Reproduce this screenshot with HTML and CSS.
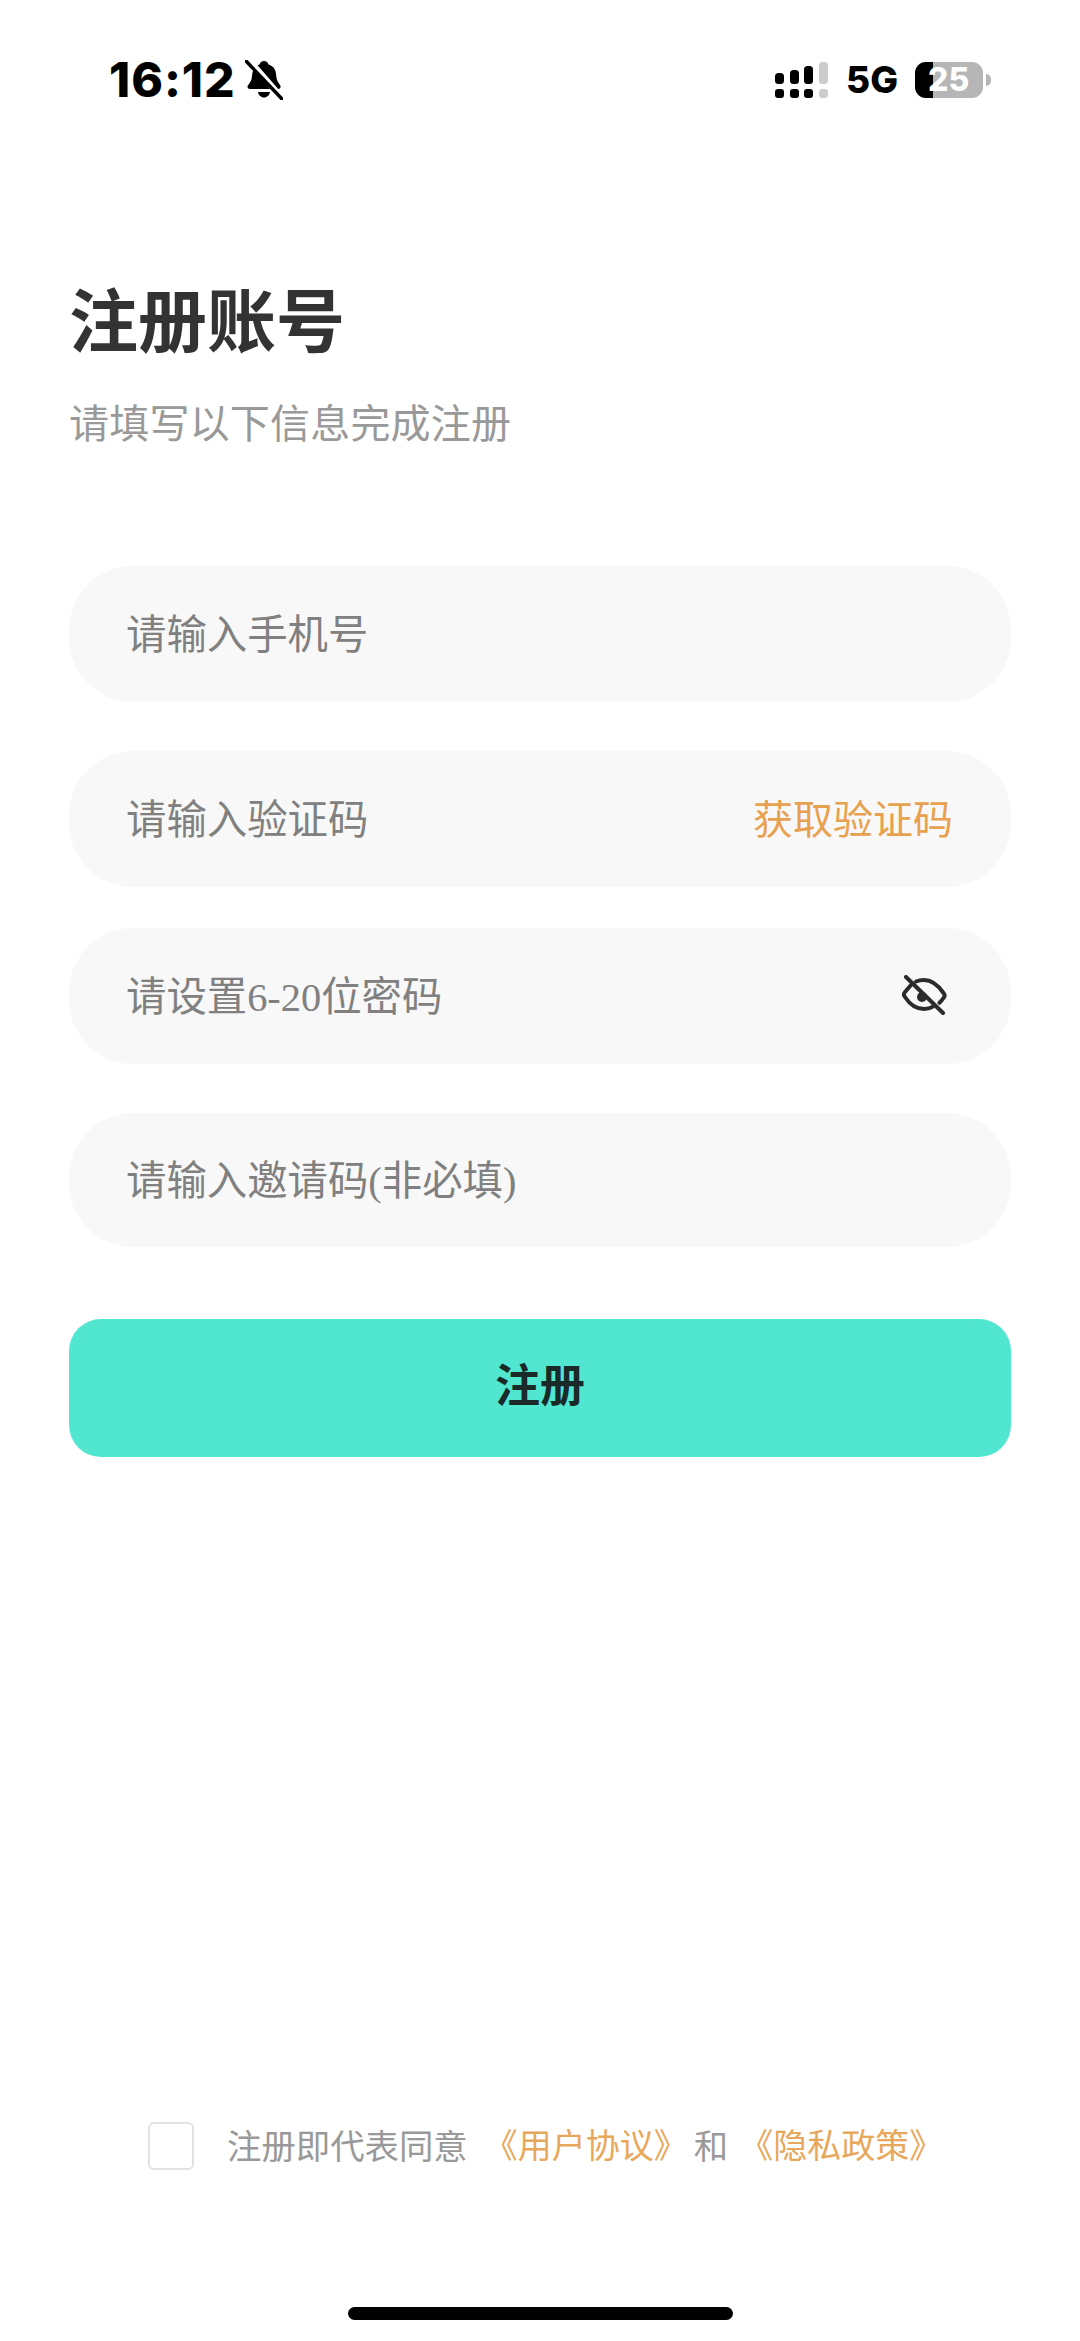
FILE: index.html
```html
<!DOCTYPE html>
<html lang="zh-CN">
<head>
    <meta charset="UTF-8">
    <meta name="viewport" content="width=device-width, initial-scale=1.0">
    <title>注册账号</title>
    <link rel="stylesheet" href="styles.css">
</head>
<body>
    <div class="page">
        <div class="status-bar">
            <div class="status-left">
                <span class="time">16:12</span>
                <svg class="bell" width="38" height="40" viewBox="0 0 38 40">
                    <path d="M19 1c2.500 0 4 1.600 4.500 3.600 5.500 1.500 7.500 6 7.800 11.400.2 4 1.700 6.500 3.700 9 1.200 1.600.6 4-1.800 4H5c-2.600 0-3.200-2.500-1.800-4 2.200-2.500 3.600-5 3.800-9 .3-5.400 2.400-9.900 7.500-11.400C15 2.600 16.500 1 19 1z"/>
                    <path d="M13 32h12c-.5 3.200-3 5.500-6 5.500s-5.500-2.300-6-5.500z"/>
                    <path class="bell-gap" d="M3 -1 37 38"/>
                    <path class="bell-slash" d="M1 1 37 39"/>
                </svg>
            </div>
            <div class="status-right">
                <svg class="signal" width="53" height="36" viewBox="0 0 53 36">
                    <rect x="0" y="11" width="9" height="11" rx="3.500"/>
                    <rect x="15" y="8" width="9" height="14" rx="3.500"/>
                    <rect x="29" y="4" width="9" height="18" rx="3.500"/>
                    <rect class="signal-off" x="44" y="0" width="9" height="22" rx="3.500"/>
                    <rect x="0" y="27" width="9" height="9" rx="3"/>
                    <rect x="15" y="27" width="9" height="9" rx="3"/>
                    <rect x="29" y="27" width="9" height="9" rx="3"/>
                    <rect class="signal-off" x="44" y="27" width="9" height="9" rx="3"/>
                </svg>
                <span class="network">5G</span>
                <div class="battery">
                    <div class="battery-body">
                        <div class="battery-level"></div>
                        <span class="battery-text">25</span>
                    </div>
                    <div class="battery-nub"></div>
                </div>
            </div>
        </div>

        <h1 class="title">注册账号</h1>
        <p class="subtitle">请填写以下信息完成注册</p>

        <div class="form">
            <div class="field">
                <span class="placeholder">请输入手机号</span>
            </div>
            <div class="field">
                <span class="placeholder">请输入验证码</span>
                <span class="get-code">获取验证码</span>
            </div>
            <div class="field field-close">
                <span class="placeholder">请设置6-20位密码</span>
                <svg class="eye" width="46" height="42" viewBox="0 0 46 42">
                    <path d="M10 10 4 17c-1.500 1.800-1.500 3.400 0 5 4.500 7 11 12 19 12 3.500 0 6.500-.8 9-2.400"/>
                    <path d="M15 6.500C17.500 5.500 20 5 23 5c7.500 0 14 5 19.500 13 1.500 1.800 1.500 3.400 0 5-1.200 1.800-2.500 3.400-4 4.800"/>
                    <circle class="eye-pupil" cx="21" cy="22" r="5"/>
                    <path d="M5 2 42 38"/>
                </svg>
            </div>
            <div class="field field-last">
                <span class="placeholder">请输入邀请码(非必填)</span>
            </div>
        </div>

        <button class="submit">注册</button>

        <div class="agree">
            <span class="checkbox"></span>
            <span class="agree-text">注册即代表同意</span>
            <span class="link">《用户协议》</span>
            <span class="agree-text">和</span>
            <span class="link">《隐私政策》</span>
        </div>

        <div class="home-indicator"></div>
    </div>
</body>
</html>
```

FILE: styles.css
```css
* {
    box-sizing: border-box;
}
html, body {
    margin: 0;
    background-color: #fff;
}
body {
    font-family: "Liberation Serif", "Noto Sans CJK SC", serif;
}
.page {
    display: flex;
    flex-direction: column;
    height: 2341px;
    padding: 0 69px;
    overflow: hidden;
}

/* status bar */
.status-bar {
    display: flex;
    justify-content: space-between;
    align-items: center;
    height: 160px;
    padding: 0 20px 0 40px;
}
.status-left, .status-right {
    display: flex;
    align-items: center;
    font-family: Inter, sans-serif;
    font-weight: 800;
    color: #000;
}
.time {
    font-size: 48px;
    line-height: 50px;
    letter-spacing: 1px;
}
.bell {
    margin-left: 9px;
    fill: #000;
}
.bell-gap, .bell-slash {
    fill: none;
    stroke-linecap: round;
}
.bell-gap {
    stroke: #fff;
    stroke-width: 6;
}
.bell-slash {
    stroke: #000;
    stroke-width: 3.500;
}
.signal {
    fill: #000;
}
.signal-off {
    fill: #ccc;
}
.network {
    margin-left: 18px;
    font-size: 37px;
    line-height: 40px;
}
.battery {
    display: flex;
    align-items: center;
    margin-left: 17px;
}
.battery-body {
    position: relative;
    display: flex;
    align-items: center;
    width: 68px;
    height: 36px;
    border-radius: 11px;
    background-color: #b6b6b6;
}
.battery-level {
    width: 18px;
    height: 100%;
    border-radius: 11px 0 0 11px;
    background-color: #000;
}
.battery-text {
    position: absolute;
    left: 13px;
    font-size: 32px;
    line-height: 36px;
    color: #fff;
}
.battery-nub {
    width: 5px;
    height: 12px;
    margin-left: 3px;
    border-radius: 0 6px 6px 0;
    background-color: #b6b6b6;
}

/* heading */
.title {
    margin: 117px 0 0;
    font-family: "Noto Sans CJK SC", sans-serif;
    font-size: 69px;
    line-height: 80px;
    font-weight: 700;
    color: #333;
}
.subtitle {
    margin: 38px 0 0;
    font-size: 40px;
    line-height: 60px;
    letter-spacing: 0.2px;
    color: #999;
}

/* form */
.form {
    display: flex;
    flex-direction: column;
    gap: 49px;
    margin-top: 111px;
}
.field {
    display: flex;
    justify-content: space-between;
    align-items: center;
    height: 136px;
    padding: 0 58px 0 57px;
    border-radius: 64px;
    background-color: #f8f8f8;
}
.field-close {
    margin-top: -8px;
    padding-right: 64px;
}
.field-last {
    height: 134px;
}
.placeholder, .get-code {
    padding-top: 4px;
    font-size: 40.4px;
    line-height: 56px;
    color: #808080;
}
.get-code {
    font-size: 40px;
    color: #e8a14f;
}
.eye {
    fill: none;
    stroke: #2b2b2b;
    stroke-width: 4;
    stroke-linecap: round;
    stroke-linejoin: round;
}
.eye-pupil {
    fill: #2b2b2b;
    stroke: none;
}
.submit {
    height: 138px;
    margin-top: 72px;
    padding: 0 0 12px;
    border: none;
    border-radius: 32px;
    background-color: #50e6cf;
    font-family: "Noto Sans CJK SC", sans-serif;
    font-size: 45px;
    font-weight: 700;
    color: #1a2a28;
}

/* agreement */
.agree {
    display: flex;
    align-items: center;
    margin-top: auto;
    margin-left: 79px;
    font-size: 34.4px;
    line-height: 48px;
}
.checkbox {
    flex-shrink: 0;
    width: 46px;
    height: 48px;
    margin-right: 33px;
    border: 2px solid #e2e2e2;
    border-radius: 6px;
    background-color: #fff;
}
.agree-text, .link {
    padding-top: 2px;
    color: #999;
}
.link {
    font-size: 34px;
    color: #e8a85c;
}
.agree-text + .link {
    margin-left: 16px;
}
.link + .agree-text {
    margin: 0 -5px 0 6px;
}
.home-indicator {
    align-self: center;
    width: 385px;
    height: 13px;
    margin-top: 136px;
    margin-bottom: 21px;
    border-radius: 7px;
    background-color: #000;
}
```
